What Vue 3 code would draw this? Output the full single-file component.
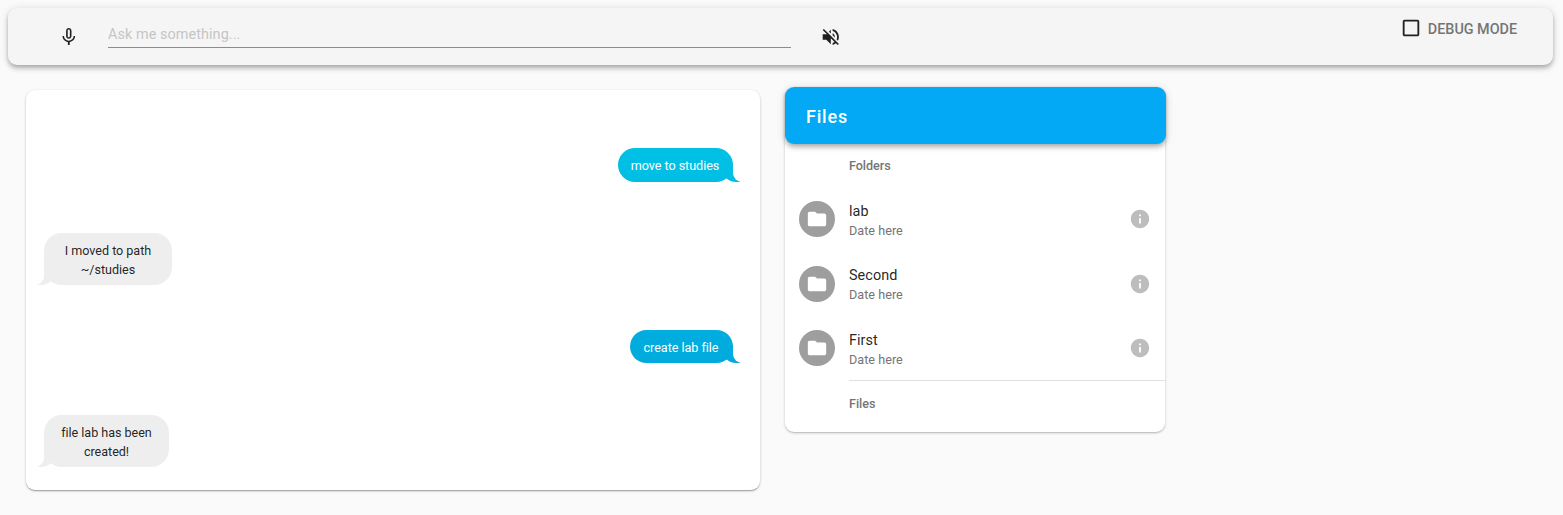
<script setup>
const messages = [
  { from: 'me', lines: ['move to studies'], id: 'm1' },
  { from: 'bot', lines: ['I moved to path', '~/studies'], id: 'm2' },
  { from: 'me', lines: ['create lab file'], id: 'm3' },
  { from: 'bot', lines: ['file lab has been', 'created!'], id: 'm4' },
]
const folders = ['lab', 'Second', 'First']
</script>

<template>
  <div class="page">
    <header class="bar">
      <svg class="icon mic" viewBox="0 0 24 24"><path d="M12 14c1.66 0 2.99-1.34 2.99-3L15 5c0-1.66-1.34-3-3-3S9 3.34 9 5v6c0 1.66 1.34 3 3 3zm-1.2-9.1c0-.66.54-1.2 1.2-1.2.66 0 1.2.54 1.2 1.2l-.01 6.2c0 .66-.53 1.2-1.19 1.2-.66 0-1.2-.54-1.2-1.2V4.900zm6.500 6.100c0 3-2.540 5.100-5.300 5.100S6.700 14 6.700 11H5c0 3.410 2.720 6.230 6 6.720V21h2v-3.280c3.280-.48 6-3.300 6-6.720h-1.700z" /></svg>
      <input class="ask" placeholder="Ask me something..." />
      <svg class="icon mute" viewBox="0 0 24 24"><path d="M16.500 12c0-1.770-1.020-3.290-2.500-4.030v2.210l2.450 2.450c.03-.2.050-.41.050-.63zm2.500 0c0 .94-.2 1.820-.54 2.640l1.510 1.510C20.630 14.910 21 13.500 21 12c0-4.280-2.990-7.860-7-8.770v2.060c2.890.86 5 3.540 5 6.710zM4.270 3L3 4.270 7.730 9H3v6h4l5 5v-6.730l4.250 4.250c-.67.52-1.420.93-2.250 1.180v2.060c1.380-.31 2.630-.95 3.690-1.810L19.730 21 21 19.730l-9-9L4.270 3zM12 4L9.910 6.090 12 8.180V4z" /></svg>
      <label class="debug">
        <svg class="check" viewBox="0 0 24 24"><path d="M19 5v14H5V5h14m0-2H5c-1.100 0-2 .9-2 2v14c0 1.100.9 2 2 2h14c1.100 0 2-.9 2-2V5c0-1.100-.9-2-2-2z" /></svg>
        <span>DEBUG MODE</span>
      </label>
    </header>

    <main class="content">
      <section class="chat">
        <div v-for="m in messages" :key="m.id" class="bubble" :class="[m.from, m.id]">
          <div v-for="line in m.lines" :key="line">{{ line }}</div>
        </div>
      </section>

      <section class="files">
        <h2 class="title">Files</h2>
        <div class="subhead">Folders</div>
        <div v-for="name in folders" :key="name" class="row">
          <span class="avatar">
            <svg viewBox="0 0 24 24"><path d="M10 4H4c-1.100 0-1.990.9-1.990 2L2 18c0 1.100.9 2 2 2h16c1.100 0 2-.9 2-2V8c0-1.100-.9-2-2-2h-8l-2-2z" /></svg>
          </span>
          <div class="label">
            <div class="name">{{ name }}</div>
            <div class="date">Date here</div>
          </div>
          <svg class="info" viewBox="0 0 24 24"><path d="M12 2C6.480 2 2 6.480 2 12s4.480 10 10 10 10-4.480 10-10S17.520 2 12 2zm1 15h-2v-6h2v6zm0-8h-2V7h2v2z" /></svg>
        </div>
        <div class="divider"></div>
        <div class="subhead last">Files</div>
      </section>
    </main>
  </div>
</template>

<style>
body {
  margin: 0;
  background: #fafafa;
}
</style>

<style scoped>
.page {
  box-sizing: border-box;
  width: 1563px;
  height: 515px;
  padding: 8px 10px 0 8px;
  overflow: hidden;
  font-family: Roboto, sans-serif;
  color: rgba(0, 0, 0, 0.87);
}
.bar {
  display: flex;
  align-items: flex-start;
  box-sizing: border-box;
  height: 57px;
  padding: 0 36px 0 50px;
  border-radius: 9px;
  background: #f5f5f5;
  box-shadow: 0 2px 4px -1px rgba(0, 0, 0, 0.2), 0 4px 5px 0 rgba(0, 0, 0, 0.14), 0 1px 10px 0 rgba(0, 0, 0, 0.12);
}
.icon {
  flex: none;
  width: 21.6px;
  height: 22px;
  margin-top: 18px;
  fill: currentColor;
}
.ask {
  box-sizing: border-box;
  width: 683px;
  height: 30px;
  margin: 10px 29px 0 28.400px;
  padding: 3px 0 0;
  border: 0;
  border-bottom: 1px solid #8c8c8c;
  outline: 0;
  background: none;
  font: 400 14.400px Roboto, sans-serif;
  letter-spacing: 0.080px;
}
.ask::placeholder {
  color: #c5c5c5;
  opacity: 1;
}
.debug {
  display: flex;
  align-items: flex-start;
  gap: 6px;
  margin: 10px 0 0 auto;
  font-size: 14.400px;
  font-weight: 500;
  line-height: 22px;
  color: #757575;
}
.debug span {
  padding-top: 1px;
  letter-spacing: -0.030px;
}
.check {
  width: 22px;
  height: 22px;
  margin-top: -1px;
  fill: #212121;
}
.content {
  display: flex;
  align-items: flex-start;
  gap: 25px;
  padding: 22px 0 0 18px;
}
.chat {
  display: flex;
  flex-direction: column;
  box-sizing: border-box;
  width: 734px;
  height: 400px;
  margin-top: 3px;
  padding: 58px 27px 0 18px;
  border-radius: 9px;
  background: #fff;
  box-shadow: 0 1px 3px 0 rgba(0, 0, 0, 0.2), 0 1px 1px 0 rgba(0, 0, 0, 0.14), 0 2px 1px -1px rgba(0, 0, 0, 0.12);
}
.bubble {
  position: relative;
  box-sizing: border-box;
  padding: 8px 13px 6px;
  border-radius: 18px;
  font-size: 12.600px;
  line-height: 19px;
  letter-spacing: -0.040px;
  text-align: center;
  white-space: nowrap;
}
.bubble::before,
.bubble::after {
  content: '';
  position: absolute;
  bottom: 0;
  height: 18px;
}
.bubble > div {
  position: relative;
  z-index: 1;
}
.me {
  align-self: flex-end;
  padding-right: 13.500px;
  padding-left: 12.500px;
  color: #fff;
}
.me,
.me::before {
  background: linear-gradient(to bottom, #00d0ea 0, #0085d1 721px) fixed;
}
.me::before {
  right: -7px;
  width: 18px;
  border-bottom-left-radius: 14px;
}
.me::after {
  right: -9px;
  width: 9px;
  background: #fff;
  border-bottom-left-radius: 9px;
}
.bot {
  align-self: flex-start;
  background: #eee;
}
.bot::before {
  left: -7px;
  width: 18px;
  background: #eee;
  border-bottom-right-radius: 14px;
}
.bot::after {
  left: -9px;
  width: 9px;
  background: #fff;
  border-bottom-right-radius: 9px;
}
.m1 {
  width: 115px;
  height: 34px;
}
.m2 {
  width: 128px;
  height: 52px;
  margin-top: 51px;
}
.m3 {
  width: 103px;
  height: 33px;
  margin-top: 45px;
}
.m4 {
  width: 125px;
  height: 52px;
  margin-top: 52px;
}
.files {
  width: 380px;
  height: 345px;
  border-radius: 9px;
  background: #fff;
  box-shadow: 0 1px 3px 0 rgba(0, 0, 0, 0.2), 0 1px 1px 0 rgba(0, 0, 0, 0.1);
}
.title {
  box-sizing: border-box;
  width: 381px;
  height: 57px;
  margin: 0;
  padding-left: 21px;
  border-radius: 9px;
  background: #03a9f4;
  box-shadow: 0 2px 4px -1px rgba(0, 0, 0, 0.2), 0 4px 5px 0 rgba(0, 0, 0, 0.14), 0 1px 10px 0 rgba(0, 0, 0, 0.12);
  color: #fff;
  font-size: 18px;
  font-weight: 500;
  line-height: 59px;
  letter-spacing: 0.800px;
}
.subhead {
  padding-left: 64px;
  height: 43px;
  font-size: 12.600px;
  font-weight: 500;
  line-height: 43px;
  letter-spacing: -0.050px;
  color: #757575;
}
.row {
  display: flex;
  align-items: center;
  box-sizing: border-box;
  height: 64.500px;
  padding: 0 14px;
}
.avatar {
  display: flex;
  align-items: center;
  justify-content: center;
  width: 36px;
  height: 36px;
  border-radius: 50%;
  background: #9e9e9e;
}
.avatar svg {
  width: 22px;
  height: 22px;
  fill: #fff;
}
.label {
  flex: 1;
  margin-left: 14px;
  padding-top: 2px;
}
.name {
  font-size: 14.400px;
  line-height: 21px;
  letter-spacing: 0.080px;
}
.date {
  font-size: 12.600px;
  line-height: 18px;
  letter-spacing: 0.040px;
  color: #757575;
}
.info {
  width: 22px;
  height: 22px;
  fill: #bdbdbd;
}
.divider {
  height: 1px;
  margin: -1px 0 0 64px;
  background: #e0e0e0;
}
.last {
  line-height: 46px;
}
</style>
